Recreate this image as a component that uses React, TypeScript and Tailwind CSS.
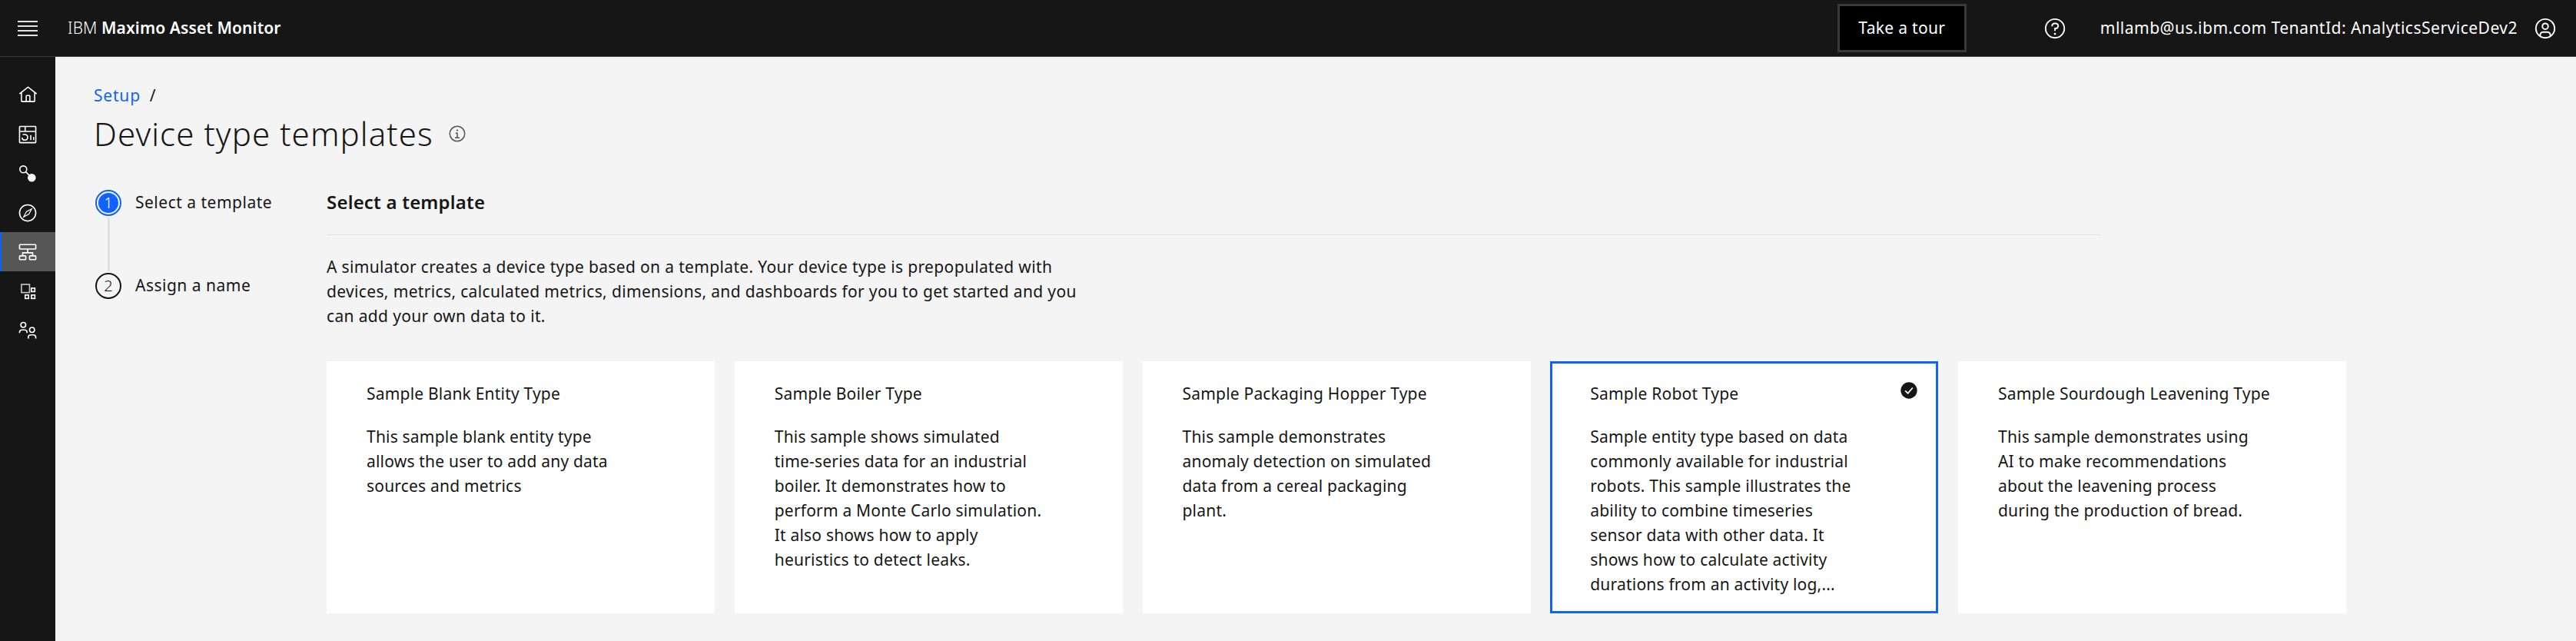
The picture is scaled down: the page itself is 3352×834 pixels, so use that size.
const Home = () => (
  <svg viewBox="0 0 32 32" className="w-[25px] h-[25px]" fill="currentColor"><path d="M16.6123,2.2138a1.01,1.01,0,0,0-1.2427,0L1,13.4194l1.2427,1.5717L4,13.6209V26a2.0041,2.0041,0,0,0,2,2H26a2.0037,2.0037,0,0,0,2-2V13.63L29.7573,15,31,13.4282ZM18,26H14V18h4Zm2,0V18a2.0023,2.0023,0,0,0-2-2H14a2.002,2.002,0,0,0-2,2v8H6V12.0615l10-7.79,10,7.8005V26Z" /></svg>
);
const Dash = () => (
  <svg viewBox="0 0 32 32" className="w-[26px] h-[26px]" fill="none" stroke="currentColor" strokeWidth="2"><rect x="3" y="3" width="26" height="26" rx="1" /><path d="M3 11H29M12 3V11M8 16h4a4.5 4.5 0 1 1-5 5M21 17v8M25.5 20v5" /></svg>
);
const Search = () => (
  <svg viewBox="0 0 32 32" className="w-[26px] h-[26px]"><circle cx="9" cy="9" r="5.5" fill="none" stroke="currentColor" strokeWidth="2" /><path d="M13 13L20 20" stroke="currentColor" strokeWidth="2" /><circle cx="22.5" cy="22.5" r="6.5" fill="currentColor" /></svg>
);
const Compass = () => (
  <svg viewBox="0 0 32 32" className="w-[26px] h-[26px]" fill="none" stroke="currentColor" strokeWidth="2"><circle cx="16" cy="16" r="13" /><path d="M22.5 9.5L18 18L9.5 22.5L14 14Z" strokeWidth="1.5" /></svg>
);
const Tree = () => (
  <svg viewBox="0 0 32 32" className="w-[26px] h-[26px]" fill="none" stroke="currentColor" strokeWidth="2"><rect x="3" y="4" width="26" height="7" rx="1" /><rect x="3" y="22" width="10" height="6" rx="1" /><rect x="19" y="22" width="10" height="6" rx="1" /><path d="M16 11V17M8 22V17H24V22" /></svg>
);
const Blocks = () => (
  <svg viewBox="0 0 32 32" className="w-[26px] h-[26px]" fill="none" stroke="currentColor" strokeWidth="2"><rect x="6" y="5" width="13" height="13" opacity="0.75" /><rect x="22" y="11" width="5.5" height="5.5" /><rect x="22" y="22" width="5.5" height="5.5" /><rect x="12" y="22" width="5.5" height="5.5" /></svg>
);
const People = () => (
  <svg viewBox="0 0 32 32" className="w-[26px] h-[26px]" fill="none" stroke="currentColor" strokeWidth="2"><circle cx="9" cy="7" r="4" /><path d="M3 20v-1a4 4 0 0 1 4-4h4a4 4 0 0 1 4 4v1" /><circle cx="23" cy="15" r="4" /><path d="M17 29v-2a4 4 0 0 1 4-4h4a4 4 0 0 1 4 4v2" /></svg>
);
const Help = () => (
  <svg viewBox="0 0 32 32" className="w-[30px] h-[30px]" fill="currentColor"><path d="M16,2A14,14,0,1,0,30,16,14,14,0,0,0,16,2Zm0,26A12,12,0,1,1,28,16,12,12,0,0,1,16,28Z" /><circle cx="16" cy="23.5" r="1.5" /><path d="M17,8H15.5A4.49,4.49,0,0,0,11,12.5V13h2v-.5A2.5,2.5,0,0,1,15.5,10H17a2.5,2.5,0,0,1,0,5H15v4.5h2V17a4.5,4.5,0,0,0,0-9Z" /></svg>
);
const User = () => (
  <svg viewBox="0 0 32 32" className="w-[30px] h-[30px]" fill="currentColor"><path d="M16,8a5,5,0,1,0,5,5A5,5,0,0,0,16,8Zm0,8a3,3,0,1,1,3-3A3.0034,3.0034,0,0,1,16,16Z" /><path d="M16,2A14,14,0,1,0,30,16,14.0158,14.0158,0,0,0,16,2ZM10,26.3765V25a3.0033,3.0033,0,0,1,3-3h6a3.0033,3.0033,0,0,1,3,3v1.3765a11.8989,11.8989,0,0,1-12,0Zm13.9925-1.4507A5.0016,5.0016,0,0,0,19,20H13a5.0016,5.0016,0,0,0-4.9925,4.9258,12,12,0,1,1,15.985,0Z" /></svg>
);
const Info = () => (
  <svg viewBox="0 0 32 32" className="w-[24px] h-[24px] text-[#525252]" fill="currentColor"><path d="M17 22V14H13v2h2v6H12v2h8V22Z" /><circle cx="16" cy="10" r="1.5" /><path d="M16,30A14,14,0,1,1,30,16,14,14,0,0,1,16,30ZM16,4A12,12,0,1,0,28,16,12,12,0,0,0,16,4Z" /></svg>
);

const cards = [
  { title: "Sample Blank Entity Type", lines: ["This sample blank entity type", "allows the user to add any data", "sources and metrics"] },
  { title: "Sample Boiler Type", lines: ["This sample shows simulated", "time-series data for an industrial", "boiler. It demonstrates how to", "perform a Monte Carlo simulation.", "It also shows how to apply", "heuristics to detect leaks."] },
  { title: "Sample Packaging Hopper Type", lines: ["This sample demonstrates", "anomaly detection on simulated", "data from a cereal packaging", "plant."] },
  { title: "Sample Robot Type", selected: true, lines: ["Sample entity type based on data", "commonly available for industrial", "robots. This sample illustrates the", "ability to combine timeseries", "sensor data with other data. It", "shows how to calculate activity", "durations from an activity log,..."] },
  { title: "Sample Sourdough Leavening Type", lines: ["This sample demonstrates using", "AI to make recommendations", "about the leavening process", "during the production of bread."] },
];

const nav = [Home, Dash, Search, Compass, Tree, Blocks, People];

export default function App() {
  return (
    <div className="h-[834px] overflow-hidden flex flex-col bg-[#f4f4f4] text-[#161616] text-[21px] tracking-[0.2px] font-['Noto_Sans',sans-serif]">
      <header className="h-[74px] shrink-0 flex items-center bg-[#161616] border-b border-[#393939] text-white">
        <div className="w-[72px] flex justify-center">
          <div className="w-[26px] flex flex-col gap-[4px]">
            <div className="h-[2px] bg-[#e0e0e0]" />
            <div className="h-[2px] bg-[#e0e0e0]" />
            <div className="h-[2px] bg-[#e0e0e0]" />
            <div className="h-[2px] bg-[#e0e0e0]" />
          </div>
        </div>
        <div className="ml-[16px] tracking-[0.1px]">
          <span className="font-light">IBM </span>
          <span className="font-semibold">Maximo Asset Monitor</span>
        </div>
        <button className="ml-auto w-[168px] h-[63px] bg-black border-[3px] border-[#393939] text-white tracking-[0.3px]">Take a tour</button>
        <div className="ml-[100px]"><Help /></div>
        <div className="ml-[44px] whitespace-nowrap tracking-[0.5px]">mllamb@us.ibm.com TenantId: AnalyticsServiceDev2</div>
        <div className="ml-[21px] mr-[25px]"><User /></div>
      </header>
      <div className="flex flex-1 min-h-0">
        <aside className="w-[72px] shrink-0 bg-[#161616] text-white pt-[24px] flex flex-col">
          {nav.map((Icon, i) => (
            <div key={i} className={"h-[51px] flex items-center justify-center " + (i === 4 ? "bg-[#565656] border-l-2 border-[#0f62fe] pr-[2px]" : "")}>
              <Icon />
            </div>
          ))}
        </aside>
        <main className="flex-1 pl-[50px] pt-[37px]">
          <div className="flex items-center gap-[12px] h-[28px] tracking-[0.8px]">
            <span className="text-[#0f62fe]">Setup</span>
            <span>/</span>
          </div>
          <div className="flex items-center mt-[5px] h-[60px]">
            <h1 className="text-[42px] font-light leading-none tracking-[1.1px]">Device type templates</h1>
            <span className="ml-[19px]"><Info /></span>
          </div>
          <div className="flex mt-[42px]">
            <div className="w-[303px] shrink-0 flex flex-col">
              <div className="flex items-center h-[36px] ml-[2px]">
                <div className="w-[34px] h-[34px] rounded-full border-2 border-[#0f62fe] p-[2px] shrink-0">
                  <div className="w-full h-full rounded-full bg-[#0f62fe] text-white flex items-center justify-center text-[20px] font-light">1</div>
                </div>
                <span className="ml-[18px] tracking-[0.5px]">Select a template</span>
              </div>
              <div className="ml-[18px] w-[3px] h-[70px] my-[1px] bg-[#e0e0e0]" />
              <div className="flex items-center h-[36px] ml-[2px]">
                <div className="w-[34px] h-[34px] rounded-full border-2 border-[#161616] flex items-center justify-center shrink-0 text-[20px] font-light">2</div>
                <span className="ml-[18px] tracking-[0.5px]">Assign a name</span>
              </div>
            </div>
            <div className="flex-1">
              <div className="w-[2308px] h-[60px] border-b border-[#e0e0e0] font-semibold text-[24px] leading-[34px]">Select a template</div>
              <p className="mt-[25px] leading-[32px] tracking-[0.35px]">
                A simulator creates a device type based on a template. Your device type is prepopulated with<br />
                devices, metrics, calculated metrics, dimensions, and dashboards for you to get started and you<br />
                can add your own data to it.
              </p>
              <div className="flex gap-[25.75px] mt-[43px]">
                {cards.map((c) => (
                  <div key={c.title} className={"relative w-[505px] h-[328px] bg-white " + (c.selected ? "border-[3px] border-[#0f62fe] pl-[49px] pt-[23px]" : "pl-[52px] pt-[26px]")}>
                    <div className="leading-[32px]">{c.title}</div>
                    <div className="mt-[24px] leading-[32px]">
                      {c.lines.map((l) => <div key={l}>{l}</div>)}
                    </div>
                    {c.selected && (
                      <svg viewBox="0 0 32 32" className="absolute top-[24px] right-[24px] w-[22px] h-[22px]">
                        <circle cx="16" cy="16" r="15.5" fill="#161616" />
                        <path d="M9 16.5L14 21.5L23 11" fill="none" stroke="#fff" strokeWidth="2.5" />
                      </svg>
                    )}
                  </div>
                ))}
              </div>
            </div>
          </div>
        </main>
      </div>
    </div>
  );
}
